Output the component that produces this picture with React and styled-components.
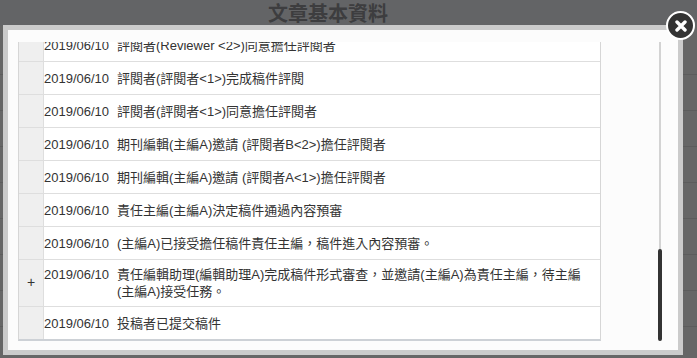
import React, { useLayoutEffect, useRef } from 'react';
import styled, { createGlobalStyle } from 'styled-components';

const GlobalStyle = createGlobalStyle`
  html, body {
    margin: 0;
    padding: 0;
    width: 100%;
    height: 100%;
    overflow: hidden;
  }

  body {
    font-family: "Liberation Sans", Arial, "Noto Sans CJK TC", sans-serif;
    font-size: 13px;
    color: #333;
    background: #fff;
  }

  * {
    box-sizing: border-box;
  }
`;

/* 後面的頁面 (被遮罩蓋住) */
const Page = styled.div`
  width: 100%;
  height: 100vh;
  background: #fff;
`;

const PageHeader = styled.header`
  height: 26px;
  padding-left: 268px;
  background: #f8fafe;
  font-family: "Noto Sans CJK TC", sans-serif;
  font-size: 20px;
  font-weight: 700;
  line-height: 26px;
  color: #989a9e;
`;

const PageRow = styled.div`
  height: 36px;
  border-bottom: 1px solid #e6e6e6;

  &:first-of-type {
    height: 49px;
  }
`;

const Overlay = styled.div`
  position: fixed;
  inset: 0;
  background: rgba(0, 0, 0, 0.6);
  padding: 25px 0 0 3px;
`;

const Modal = styled.div`
  position: relative;
  width: 680px;
  height: 330px;
  border: 5px solid #cbcbcb;
  background: #fcfcfc;
  padding: 12px 0 0 10px;
`;

const CloseButton = styled.button`
  position: absolute;
  top: -19px;
  right: -17px;
  width: 29px;
  height: 29px;
  padding: 0;
  border: 2.5px solid #fff;
  border-radius: 50%;
  background: #333;
  display: flex;
  align-items: center;
  justify-content: center;
  cursor: pointer;
`;

const ScrollWrap = styled.div`
  position: relative;
  width: 644px;
  height: 299px;
`;

const Scroller = styled.div`
  width: 100%;
  height: 100%;
  overflow: hidden;
`;

const Rail = styled.div`
  position: absolute;
  top: 0;
  right: 1px;
  width: 2px;
  height: 100%;
  background: #d3d3d3;
`;

const Thumb = styled.div`
  position: absolute;
  top: 207px;
  right: 0;
  width: 4px;
  height: 92px;
  border-radius: 2px;
  background: #333;
`;

const LogTable = styled.div`
  width: 583px;
  background: #fff;
  border-left: 1px solid #d6d6d6;
  border-right: 1px solid #d6d6d6;
  border-bottom: 2px solid #cdd1d6;
`;

const Row = styled.div`
  display: grid;
  grid-template-columns: 25px 1fr;
  min-height: 33px;
  border-top: 1px solid #dedede;
`;

const Marker = styled.div`
  display: flex;
  align-items: center;
  justify-content: center;
  background: #efefef;
  border-right: 1px solid #dedede;
  font-size: 14px;
  line-height: 17px;
  padding-bottom: 1px;
`;

const Entry = styled.div`
  display: flex;
  align-items: flex-start;
  align-self: center;
  padding: 6px 12px 6px 0;
  line-height: 17px;
`;

const EntryDate = styled.span`
  flex: none;
  width: 73px;
`;

const EntryText = styled.span`
  flex: 1;
`;

const logs = [
  { date: '2019/06/20', text: '期刊編輯(主編A)決定稿件接受刊登' },
  { date: '2019/06/18', text: '責任主編(主編A)提交審查決定' },
  { date: '2019/06/15', text: '評閱者(Reviewer <2>)完成稿件評閱' },
  { date: '2019/06/12', text: '評閱者(評閱者<1>)開始稿件評閱' },
  { date: '2019/06/10', text: '評閱者(Reviewer <2>)同意擔任評閱者' },
  { date: '2019/06/10', text: '評閱者(評閱者<1>)完成稿件評閱' },
  { date: '2019/06/10', text: '評閱者(評閱者<1>)同意擔任評閱者' },
  { date: '2019/06/10', text: '期刊編輯(主編A)邀請 (評閱者B<2>)擔任評閱者' },
  { date: '2019/06/10', text: '期刊編輯(主編A)邀請 (評閱者A<1>)擔任評閱者' },
  { date: '2019/06/10', text: '責任主編(主編A)決定稿件通過內容預審' },
  { date: '2019/06/10', text: '(主編A)已接受擔任稿件責任主編，稿件進入內容預審。' },
  {
    date: '2019/06/10',
    text: '責任編輯助理(編輯助理A)完成稿件形式審查，並邀請(主編A)為責任主編，待主編(主編A)接受任務。',
    more: true,
  },
  { date: '2019/06/10', text: '投稿者已提交稿件' },
];

function CloseIcon() {
  return (
    <svg width="12" height="12" viewBox="0 0 12 12">
      <path d="M2 2 L10 10 M10 2 L2 10" stroke="#fff" strokeWidth="3.4" strokeLinecap="round" />
    </svg>
  );
}

export default function App() {
  const scrollRef = useRef(null);

  // 紀錄列表捲到最底
  useLayoutEffect(() => {
    const el = scrollRef.current;
    if (el) el.scrollTop = el.scrollHeight;
  }, []);

  return (
    <>
      <GlobalStyle />
      <Page>
        <PageHeader>文章基本資料</PageHeader>
        {Array.from({ length: 8 }).map((_, i) => (
          <PageRow key={i} />
        ))}
      </Page>
      <Overlay>
        <Modal>
          <CloseButton aria-label="關閉">
            <CloseIcon />
          </CloseButton>
          <ScrollWrap>
            <Scroller ref={scrollRef}>
              <LogTable>
                {logs.map((log, i) => (
                  <Row key={i}>
                    <Marker>{log.more ? '+' : ''}</Marker>
                    <Entry>
                      <EntryDate>{log.date}</EntryDate>
                      <EntryText>{log.text}</EntryText>
                    </Entry>
                  </Row>
                ))}
              </LogTable>
            </Scroller>
            <Rail />
            <Thumb />
          </ScrollWrap>
        </Modal>
      </Overlay>
    </>
  );
}
